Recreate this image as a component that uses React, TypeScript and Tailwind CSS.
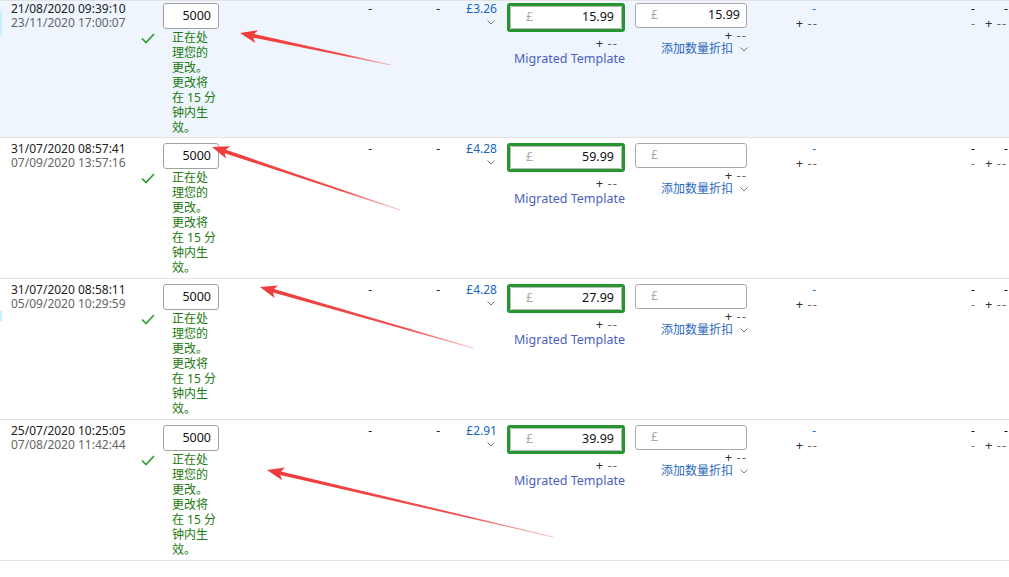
import React from "react";

type Row = {
  d1: string;
  d2: string;
  price: string;
  val: string;
  val2: string;
  hl?: boolean;
};

const rows: Row[] = [
  { d1: "21/08/2020 09:39:10", d2: "23/11/2020 17:00:07", price: "£3.26", val: "15.99", val2: "15.99", hl: true },
  { d1: "31/07/2020 08:57:41", d2: "07/09/2020 13:57:16", price: "£4.28", val: "59.99", val2: "" },
  { d1: "31/07/2020 08:58:11", d2: "05/09/2020 10:29:59", price: "£4.28", val: "27.99", val2: "" },
  { d1: "25/07/2020 10:25:05", d2: "07/08/2020 11:42:44", price: "£2.91", val: "39.99", val2: "" },
];

const arrows = [
  { tip: [240, 33], tail: [391, 65] },
  { tip: [212, 147], tail: [400, 210] },
  { tip: [260, 287], tail: [473, 348] },
  { tip: [267, 470], tail: [553, 537] },
];

function Chevron() {
  return (
    <svg width="8" height="5" viewBox="0 0 8 5" className="inline-block">
      <polyline points="0.5,0.5 4,4 7.5,0.5" fill="none" stroke="#7a7a7a" strokeWidth="1" />
    </svg>
  );
}

function Check() {
  return (
    <svg width="14" height="11" viewBox="0 0 14 11">
      <polyline points="1,5.5 5,9.5 13,1" fill="none" stroke="#2e9b2e" strokeWidth="1.6" />
    </svg>
  );
}

function PlusDash() {
  return (
    <span className="inline-flex h-[13px] items-center whitespace-pre text-[13px] leading-[13px] overflow-visible">
      <span className="text-[#333]">+</span>
      <span className="text-[#666] tracking-[1px]"> --</span>
    </span>
  );
}

function Arrow({ tip, tail, id }: { tip: number[]; tail: number[]; id: string }) {
  const dx = tail[0] - tip[0];
  const dy = tail[1] - tip[1];
  const len = Math.sqrt(dx * dx + dy * dy);
  const ux = dx / len;
  const uy = dy / len;
  const nx = -uy;
  const ny = ux;
  const hl = 17;
  const hw = 6.5;
  const bx = tip[0] + ux * hl;
  const by = tip[1] + uy * hl;
  const nbx = tip[0] + ux * (hl - 3);
  const nby = tip[1] + uy * (hl - 3);
  const pts = [
    [tip[0], tip[1]],
    [bx + nx * hw, by + ny * hw],
    [nbx + nx * 1.8, nby + ny * 1.8],
    [tail[0] + nx * 0.4, tail[1] + ny * 0.4],
    [tail[0] - nx * 0.4, tail[1] - ny * 0.4],
    [nbx - nx * 1.8, nby - ny * 1.8],
    [bx - nx * hw, by - ny * hw],
  ]
    .map((p) => `${p[0].toFixed(1)},${p[1].toFixed(1)}`)
    .join(" ");
  return (
    <>
      <defs>
        <linearGradient id={id} gradientUnits="userSpaceOnUse" x1={tip[0]} y1={tip[1]} x2={tail[0]} y2={tail[1]}>
          <stop offset="0" stopColor="#ef3a3a" stopOpacity="1" />
          <stop offset="0.7" stopColor="#f04545" stopOpacity="0.95" />
          <stop offset="1" stopColor="#f58a8a" stopOpacity="0.5" />
        </linearGradient>
      </defs>
      <polygon points={pts} fill={`url(#${id})`} />
    </>
  );
}

function TableRow({ r, first, idx }: { r: Row; first: boolean; idx: number }) {
  return (
    <div
      className={
        first
          ? "relative h-[138px] border-t border-b border-[#e2e2e2] bg-[#eef5fd] overflow-hidden"
          : "relative h-[141px] border-b border-[#e2e2e2] bg-white overflow-hidden"
      }
    >
      {(idx === 0 || idx === 2) && (
        <div className={idx === 0 ? "absolute left-0 top-[10px] h-[25px] w-[2px] bg-[#c6efff]" : "absolute left-0 top-[32px] h-[10px] w-[2px] bg-[#c6efff]"} />
      )}
      <div className={first ? "flex items-start -mt-[3px]" : "flex items-start"}>
        {/* dates */}
        <div className="w-[135px] pl-[11px] pt-[4px] text-[12px] leading-[14px] whitespace-nowrap">
          <div className="text-[#222]">{r.d1}</div>
          <div className="text-[#666]">{r.d2}</div>
        </div>
        {/* check */}
        <div className="w-[28px] pl-[6px] pt-[35px]">
          <Check />
        </div>
        {/* qty */}
        <div className="w-[67px] pt-[5px]">
          <div className="w-[56px] h-[26px] border border-[#a3a3a3] rounded-[3px] bg-white flex items-center justify-end pr-[7px] text-[12.5px] text-[#111]">
            5000
          </div>
          <div className="w-[45px] ml-[9px] mt-[1px] text-[12px] leading-[15px] text-[#1b7a10]">
            正在处理您的更改。更改将在 15 分钟内生效。
          </div>
        </div>
        {/* dash 1 */}
        <div className="w-[142px] pt-[4px] text-right text-[12px] leading-[14px] text-[#222]">-</div>
        {/* dash 2 */}
        <div className="w-[68px] pt-[4px] text-right text-[12px] leading-[14px] text-[#222]">-</div>
        {/* price */}
        <div className="w-[57px] pt-[4px] text-right text-[12px] leading-[14px]">
          <div className="text-[#1765c2]">{r.price}</div>
          <div className="flex justify-end pr-[2px] pt-[4px]">
            <Chevron />
          </div>
        </div>
        {/* green input */}
        <div className="ml-[10px] w-[118px] pt-[5px]">
          <div className="h-[29px] border-[3px] border-[#24952f] rounded-[3px]">
            <div className="h-full border border-[#b8b8b8] rounded-[2px] bg-white flex items-center justify-between pl-[15px] pr-[7px] text-[12.5px]">
              <span className="text-[#aaa]">£</span>
              <span className="text-[#111]">{r.val}</span>
            </div>
          </div>
          <div className="mt-[5px] h-[13px] pr-[7px] flex justify-end">
            <PlusDash />
          </div>
          <div className="text-right text-[12.5px] leading-[18px] text-[#4a5fbe] whitespace-nowrap">Migrated Template</div>
        </div>
        {/* second input */}
        <div className="ml-[10px] w-[112px] pt-[5px]">
          <div className="h-[25px] border border-[#a8a8a8] rounded-[3px] bg-white flex items-center justify-between pl-[15px] pr-[6px] text-[12.5px]">
            <span className="text-[#aaa]">£</span>
            <span className="text-[#111]">{r.val2}</span>
          </div>
          <div className="mt-[1px] h-[13px] flex justify-end">
            <PlusDash />
          </div>
          <div className="flex items-center justify-end text-[12px] leading-[14px] text-[#2a68bf] whitespace-nowrap">
            <span className="leading-[14px]">添加数量折扣</span>
            <span className="ml-[7px] mr-[-1px] flex items-center">
              <Chevron />
            </span>
          </div>
        </div>
        {/* col 9 */}
        <div className="w-[72px] pt-[4px] text-right text-[12px] leading-[14px]">
          <div className="text-[#1e6fd0] pr-[3px] h-[14px]">-</div>
          <div className="pr-[1px] mt-[1px] h-[13px] flex justify-end">
            <PlusDash />
          </div>
        </div>
        {/* col 10 */}
        <div className="flex-1 pt-[4px] text-[12px] leading-[14px] whitespace-nowrap">
          <div className="flex h-[14px]">
            <span className="ml-[152px] text-[#111]">-</span>
            <span className="ml-[29px] text-[#111]">-</span>
          </div>
          <div className="flex h-[13px] mt-[1px] items-center">
            <span className="ml-[152px] text-[#777] leading-[13px]">-</span>
            <span className="ml-[10px] flex">
              <PlusDash />
            </span>
          </div>
        </div>
      </div>
    </div>
  );
}

export default function App() {
  return (
    <div
      className="relative w-[1009px] h-[577px] bg-white overflow-hidden"
      style={{ fontFamily: '"Noto Sans", "Noto Sans CJK SC", sans-serif' }}
    >
      {rows.map((r, i) => (
        <TableRow key={i} r={r} first={i === 0} idx={i} />
      ))}
      <svg className="absolute left-0 top-0 pointer-events-none" width="1009" height="577" viewBox="0 0 1009 577">
        {arrows.map((a, i) => (
          <Arrow key={i} tip={a.tip} tail={a.tail} id={`ag${i}`} />
        ))}
      </svg>
    </div>
  );
}
